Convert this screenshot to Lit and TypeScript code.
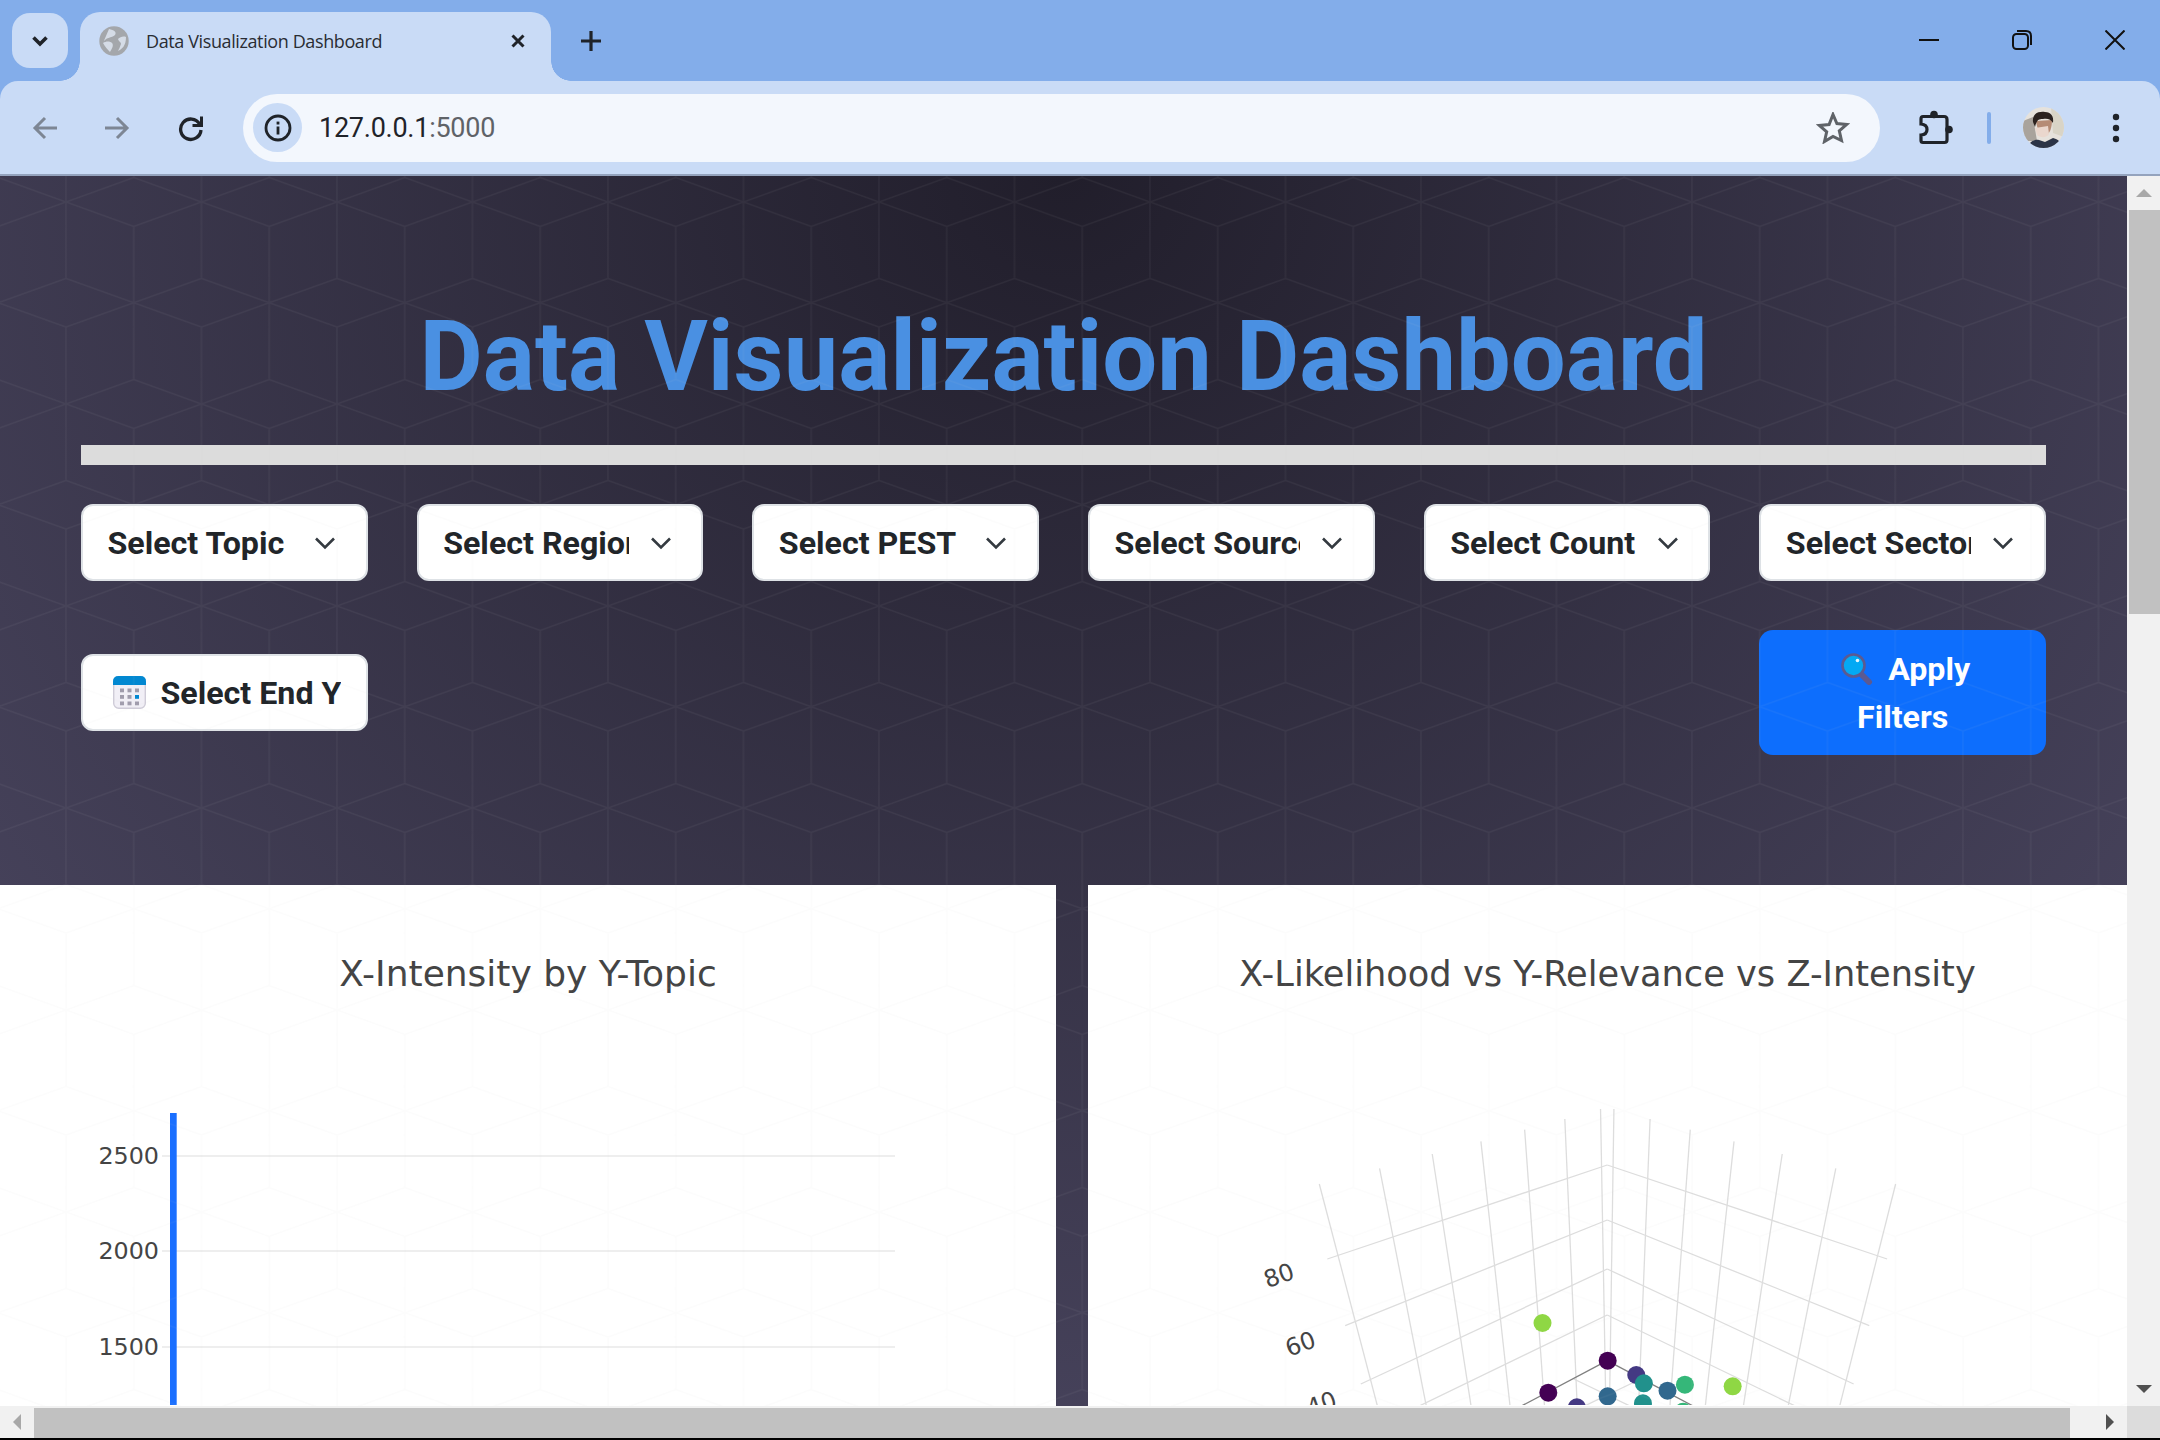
import { LitElement, html, css, svg } from "lit";
import { customElement } from "lit/decorators.js";

const LABELS = ["Select Topic", "Select Region", "Select PEST", "Select Source", "Select Country", "Select Sector"];

const zx = (x: number) => 142 + x / 2.24;
const zy = (y: number) => 74 + y / 3;

const GRID_LINES: number[][] = [
  [200, 285, 332, 960], [335, 238, 441, 960], [453, 195, 541, 960], [562, 157, 628, 960],
  [660, 122, 705, 960], [750, 90, 778, 960], [830, 60, 842, 960], [860, 60, 850, 960],
  [941, 90, 915, 960], [1031, 122, 985, 960], [1129, 157, 1064, 960], [1237, 195, 1149, 960],
  [1357, 238, 1249, 960], [1491, 285, 1364, 960],
  [845, 228, 218, 510], [845, 228, 1472, 510],
  [845, 393, 258, 710], [845, 393, 1432, 710],
  [845, 540, 293, 885], [845, 540, 1397, 885],
  [845, 678, 410, 960], [845, 678, 1280, 960],
  [770, 870, 910, 960], [920, 870, 780, 960],
];
const DARK_LINES: number[][] = [[845, 815, 640, 960], [845, 815, 1050, 960]];
const POINTS: [number, number, string][] = [
  [700, 702, "#8fd744"], [846, 815, "#440154"], [713, 911, "#440154"], [910, 858, "#443983"],
  [777, 955, "#443983"], [846, 922, "#31688e"], [980, 905, "#31688e"], [927, 883, "#21918c"],
  [925, 943, "#21918c"], [1019, 887, "#35b779"], [1015, 968, "#35b779"], [1126, 892, "#8fd744"],
];
const Z_TICKS: [string, number, number][] = [["80", 110, 560], ["60", 158, 765], ["40", 205, 945]];
const Y_TICKS: [string, number][] = [["2500", 141], ["2000", 236], ["1500", 332]];

@customElement("app-root")
export class AppRoot extends LitElement {
  static styles = css`
    :host { display: block; width: 2160px; height: 1440px; overflow: hidden; background: #000; font-family: Roboto, "Liberation Sans", sans-serif; }
    svg { display: block; flex: none; }
    .shell { display: flex; flex-direction: column; height: 1438px; }

    .chrome { background: #83adea; flex: none; }
    .strip { height: 81px; display: flex; align-items: flex-end; padding-left: 12px; box-sizing: border-box; }
    .tab-search { width: 56px; height: 55px; margin-bottom: 13px; border-radius: 18px; background: #c9dbf6; display: flex; align-items: center; justify-content: center; }
    .tab { position: relative; margin-left: 12px; width: 471px; height: 69px; padding: 0 0 12px 19px; box-sizing: border-box; background: #c9dbf6; border-radius: 20px 20px 0 0; display: flex; align-items: center; }
    .tab::before, .tab::after { content: ""; position: absolute; bottom: 0; width: 20px; height: 20px; }
    .tab::before { left: -20px; background: radial-gradient(circle at 0 0, transparent 19.5px, #c9dbf6 20px); }
    .tab::after { right: -20px; background: radial-gradient(circle at 100% 0, transparent 19.5px, #c9dbf6 20px); }
    .tab-title { margin-left: 17px; font-family: "Open Sans", sans-serif; font-size: 18px; letter-spacing: -0.39px; color: #2a2d33; white-space: nowrap; width: 363px; flex: none; }
    .new-tab { margin: 0 0 29px 29px; }
    .win { margin-left: auto; display: flex; align-items: center; gap: 73px; margin-bottom: 31px; padding-right: 35px; }

    .toolbar { height: 93px; background: #c9dbf6; border-radius: 18px 18px 0 0; display: flex; align-items: center; padding-left: 24.5px; box-sizing: border-box; }
    .tb-icon { width: 40px; height: 40px; display: flex; align-items: center; justify-content: center; flex: none; }
    .fwd { margin-left: 32.5px; }
    .reload { margin-left: 33.5px; }
    .omni { margin-left: 32.5px; width: 1637px; height: 68px; border-radius: 34px; background: #f3f7fd; display: flex; align-items: center; flex: none; }
    .chip { margin-left: 10px; width: 49px; height: 49px; border-radius: 50%; background: #c9dbf6; display: flex; align-items: center; justify-content: center; }
    .url { margin-left: 17px; padding-top: 1px; font-size: 27px; letter-spacing: -0.25px; color: #1f2329; }
    .url span { color: #5f6368; }
    .star { margin-left: auto; margin-right: 27px; }
    .ext { margin-left: 36px; }
    .divider { margin-left: 31px; width: 4px; height: 32px; border-radius: 2px; background: #83adea; flex: none; }
    .avatar { margin-left: 31.5px; width: 41px; height: 41px; border-radius: 50%; overflow: hidden; flex: none; }
    .menu { margin-left: 32.5px; }
    .sep { height: 2px; background: #94a3bd; flex: none; }

    .view { flex: 1; display: flex; min-height: 0; }
    .page { position: relative; flex: 1; min-width: 0; overflow: hidden; display: flex; flex-direction: column; background: radial-gradient(ellipse 1500px 1400px at 1063px 0, #211e2b 0, #4a4660 100%); }
    .pattern { position: absolute; inset: 0; width: 100%; height: 100%; pointer-events: none; }

    .head { padding: 124px 81px 130px; flex: none; }
    h1 { margin: 0; text-align: center; font-size: 97.4px; line-height: 115px; font-weight: 700; color: #4a90e2; white-space: nowrap; }
    .rule { height: 20px; margin: 30px 0 39.4px; background: #dcdcdc; }
    .filters { display: grid; grid-template-columns: repeat(6, 1fr); gap: 49.4px 49px; align-items: center; }
    .field { height: 76.7px; box-sizing: border-box; border: 2px solid #dee2e6; border-radius: 12px; background: #fff; display: flex; align-items: center; padding-left: 24.5px; color: #212529; font-size: 32.2px; font-weight: 700; }
    .label { width: 185.5px; overflow: hidden; white-space: nowrap; flex: none; }
    .chev { margin-left: 21px; }
    .year { padding-left: 30px; }
    .year-text { margin-left: 14.5px; white-space: nowrap; overflow: hidden; }
    .apply { grid-column: 6; height: 124.7px; box-sizing: border-box; border-radius: 14px; background: #0d6efd; color: #fff; font-size: 32.2px; font-weight: 700; line-height: 48px; text-align: center; padding-top: 15px; }
    .apply-top { display: flex; align-items: center; justify-content: center; gap: 15px; padding-left: 6px; }

    .cards { flex: 1; min-height: 0; display: grid; grid-template-columns: 1056px 1fr; gap: 32px; }
    .card { background: #fff; overflow: hidden; min-width: 0; }
    .card-title { padding-top: 69px; height: 40px; line-height: 40px; margin-bottom: 21px; text-align: center; font-family: "DejaVu Sans", Verdana, sans-serif; color: #444; white-space: nowrap; }
    .title-a { font-size: 36px; }
    .title-b { font-size: 35.2px; }
    .tick { font-family: "DejaVu Sans", Verdana, sans-serif; font-size: 23.8px; fill: #444; }

    .vbar { width: 33px; flex: none; background: #f1f1f1; display: flex; flex-direction: column; }
    .vbtn { height: 34px; display: flex; align-items: center; justify-content: center; flex: none; }
    .vthumb { height: 404px; margin-left: 2px; background: #c1c1c1; flex: none; }
    .vdown { margin-top: auto; }
    .hbar { height: 32px; flex: none; display: flex; background: #f1f1f1; }
    .hbtn { width: 34px; display: flex; align-items: center; justify-content: center; flex: none; }
    .hthumb { width: 2036px; margin-top: 2px; background: #c1c1c1; flex: none; }
    .hright { width: 57px; display: flex; align-items: center; justify-content: center; flex: none; padding-left: 22px; box-sizing: border-box; }
    .corner { width: 33px; background: #dcdcdc; flex: none; }

    .up { width: 0; height: 0; border-left: 8px solid transparent; border-right: 8px solid transparent; border-bottom: 8px solid #a8a8a8; }
    .down { width: 0; height: 0; border-left: 8px solid transparent; border-right: 8px solid transparent; border-top: 8px solid #505050; }
    .left { width: 0; height: 0; border-top: 8px solid transparent; border-bottom: 8px solid transparent; border-right: 8px solid #a8a8a8; }
    .right { width: 0; height: 0; border-top: 8px solid transparent; border-bottom: 8px solid transparent; border-left: 8px solid #505050; }
  `;

  private chevron() {
    return html`<svg class="chev" width="22" height="14" viewBox="0 0 22 14"><path d="M2 2.5 11 11.5 20 2.5" fill="none" stroke="#343a40" stroke-width="2.6"/></svg>`;
  }

  private chrome() {
    return html`
      <div class="chrome">
        <div class="strip">
          <div class="tab-search">
            <svg width="18" height="12" viewBox="0 0 18 12"><path d="M2.5 2.5 9 9l6.5-6.5" fill="none" stroke="#1f2329" stroke-width="3.6"/></svg>
          </div>
          <div class="tab">
            <svg width="30" height="30" viewBox="0 0 30 30">
              <circle cx="15" cy="15" r="14.7" fill="#a4a7ab"/>
              <path d="M10 3C15 4 18 6 16 9 13 12 6 11 4 17 7 15 11 15 13 17 15 19 13 23 11 26 9 24 6 21 4 17M27 11c-3-1-6 0-8 2 1 3 3 3 3 5-1 3-2 5-3 7 4-2 8-5 8-14Z" fill="#d5dce6"/>
            </svg>
            <span class="tab-title">Data Visualization Dashboard</span>
            <svg width="18" height="18" viewBox="0 0 18 18"><path d="M3.5 3.5l11 11M14.5 3.5l-11 11" stroke="#1f2329" stroke-width="3"/></svg>
          </div>
          <svg class="new-tab" width="22" height="22" viewBox="0 0 22 22"><path d="M11 1v20M1 11h20" stroke="#1f2329" stroke-width="3.2"/></svg>
          <div class="win">
            <svg width="20" height="20" viewBox="0 0 20 20"><path d="M0 10h20" stroke="#111" stroke-width="2"/></svg>
            <svg width="20" height="20" viewBox="0 0 20 20" fill="none" stroke="#111" stroke-width="2"><rect x="1" y="4" width="15" height="15" rx="3.5"/><path d="M5 1h9c3 0 5 2 5 5v9"/></svg>
            <svg width="20" height="20" viewBox="0 0 20 20"><path d="M0.5 0.5l19 19M19.5 0.5l-19 19" stroke="#111" stroke-width="2"/></svg>
          </div>
        </div>
        <div class="toolbar">
          <div class="tb-icon"><svg width="26" height="24" viewBox="0 0 26 24" fill="none" stroke="#7d8694" stroke-width="3"><path d="M25 12H3M13 2 3 12l10 10"/></svg></div>
          <div class="tb-icon fwd"><svg width="26" height="24" viewBox="0 0 26 24" fill="none" stroke="#7d8694" stroke-width="3"><path d="M1 12h22M13 2l10 10-10 10"/></svg></div>
          <div class="tb-icon reload"><svg width="28" height="28" viewBox="0 0 28 28" fill="none" stroke="#1f2329" stroke-width="3.3"><path d="M22.6 10A10.2 10.2 0 1 0 24 16"/><path d="M24.5 2.5v9h-9" stroke-width="3"/></svg></div>
          <div class="omni">
            <div class="chip"><svg width="28" height="28" viewBox="0 0 28 28"><circle cx="14" cy="14" r="12" fill="none" stroke="#1f2329" stroke-width="2.8"/><rect x="12.6" y="12.5" width="2.8" height="8" fill="#1f2329"/><rect x="12.6" y="7.6" width="2.8" height="2.9" fill="#1f2329"/></svg></div>
            <div class="url">127.0.0.1<span>:5000</span></div>
            <div class="tb-icon star"><svg width="34" height="32" viewBox="0 1 34 32"><path d="M17 3.5l3.9 9 9.8.9-7.4 6.5 2.2 9.6L17 25.4l-8.5 5.1 2.2-9.6-7.4-6.5 9.8-.9z" fill="none" stroke="#5f6368" stroke-width="3"/></svg></div>
          </div>
          <div class="tb-icon ext"><svg width="36" height="36" viewBox="0 1 36 36"><path d="M5 7.5H26Q29 7.5 29 10.500V31Q29 33.500 26.500 33.500H5Q3 33.500 3 31.500V26Q9 25.500 9 20.500 9 15.500 3 15V10Q3 7.500 5 7.500Z" fill="none" stroke="#1f2329" stroke-width="3.200"/><circle cx="16" cy="5.500" r="3.800" fill="#1f2329"/><circle cx="31" cy="20.500" r="3.800" fill="#1f2329"/></svg></div>
          <div class="divider"></div>
          <div class="avatar">
            <svg width="41" height="41" viewBox="0 0 41 41">
              <rect width="41" height="41" fill="#e6e2dc"/>
              <path d="M0 14 10 10 14 34 0 34Z" fill="#a9a39c"/>
              <path d="M28 0H41V30L30 26Z" fill="#d9d4c6"/>
              <path d="M13 14C14 22 17 28 22 28 27 28 29 20 29 13Z" fill="#b58c76"/>
              <path d="M10 15C9 7 15 4 22 5 28 5 31 9 30 16 28 12 24 11 20 12 16 12 14 12 12 20Z" fill="#2b221f"/>
              <path d="M12 21 25 19 26 27C24 31 17 31 14 28Z" fill="#ead7cd"/>
              <path d="M4 41C7 34 12 32 16 33L22 35 30 31C34 32 38 34 40 41Z" fill="#2c3446"/>
            </svg>
          </div>
          <div class="tb-icon menu"><svg width="8" height="30" viewBox="0 0 8 30" fill="#1f2329"><circle cx="4" cy="4" r="3.200"/><circle cx="4" cy="15" r="3.200"/><circle cx="4" cy="26" r="3.200"/></svg></div>
        </div>
        <div class="sep"></div>
      </div>
    `;
  }

  private barChart() {
    return html`
      <svg width="1056" height="390" viewBox="0 0 1056 390">
        ${Y_TICKS.map(([t, y]) => svg`
          <line x1="162" x2="895" y1=${y} y2=${y} stroke="#eeeeee" stroke-width="2"/>
          <text class="tick" x="159" y=${y + 7.5} text-anchor="end">${t}</text>
        `)}
        <rect x="170" y="98" width="6.700" height="292" fill="#1a6fff"/>
      </svg>
    `;
  }

  private scatter() {
    return html`
      <svg width="1039" height="390" viewBox="0 0 1039 390">
        ${GRID_LINES.map(([a, b, c, d]) => svg`<line x1=${zx(a)} y1=${zy(b)} x2=${zx(c)} y2=${zy(d)} stroke="#dddddd" stroke-width="1.300"/>`)}
        ${DARK_LINES.map(([a, b, c, d]) => svg`<line x1=${zx(a)} y1=${zy(b)} x2=${zx(c)} y2=${zy(d)} stroke="#808080" stroke-width="1.300"/>`)}
        ${Z_TICKS.map(([t, x, y]) => svg`<text class="tick" text-anchor="middle" dominant-baseline="central" transform="translate(${zx(x)} ${zy(y)}) rotate(-20)">${t}</text>`)}
        ${POINTS.map(([x, y, c]) => svg`<circle cx=${zx(x)} cy=${zy(y)} r="9" fill=${c}/>`)}
      </svg>
    `;
  }

  render() {
    return html`
      <div class="shell">
        ${this.chrome()}
        <div class="view">
          <div class="page">
            <div class="head">
              <h1>Data Visualization Dashboard</h1>
              <div class="rule"></div>
              <div class="filters">
                ${LABELS.map((l) => html`<div class="field"><span class="label">${l}</span>${this.chevron()}</div>`)}
                <div class="field year">
                  <svg width="33" height="33" viewBox="0 0 33 33">
                    <rect x="0.700" y="0.700" width="31.600" height="31.600" rx="5" fill="#f1eff6" stroke="#cfccd8" stroke-width="1.400"/>
                    <path d="M0 9V5.500Q0 0 5.500 0H27.500Q33 0 33 5.500V9Z" fill="#0288d1"/>
                    ${[0, 1, 2].flatMap((r) => [0, 1, 2].map((c) => svg`<rect x=${7 + c * 7.5} y=${12.500 + r * 6.500} width="4" height="3.800" fill=${r === 1 && c === 2 ? "#0288d1" : "#a09cac"}/>`))}
                  </svg>
                  <span class="year-text">Select End Y</span>
                </div>
                <div class="apply">
                  <div class="apply-top">
                    <svg width="32" height="32" viewBox="0 0 32 32">
                      <path d="M19 20l9 9" stroke="#5c5a91" stroke-width="6" stroke-linecap="round"/>
                      <circle cx="12.500" cy="12.500" r="11" fill="#03a9f4" stroke="#5c5a91" stroke-width="2.600"/>
                      <circle cx="16.500" cy="7.500" r="1.800" fill="#e3f6ff"/>
                    </svg>
                    <span>Apply</span>
                  </div>
                  <div>Filters</div>
                </div>
              </div>
            </div>
            <div class="cards">
              <div class="card">
                <div class="card-title title-a">X-Intensity by Y-Topic</div>
                ${this.barChart()}
              </div>
              <div class="card">
                <div class="card-title title-b">X-Likelihood vs Y-Relevance vs Z-Intensity</div>
                ${this.scatter()}
              </div>
            </div>
            <svg class="pattern">
              <defs>
                <pattern id="hex" x="66" y="26" width="135.500" height="202" patternUnits="userSpaceOnUse">
                  <path d="M0 0V76.500M0 125V202M135.500 0V76.500M135.500 125V202M67.750 24.500V177.500M0 0 67.750 24.500 135.500 0M0 76.500 135.500 125M135.500 76.500 0 125M0 202 67.750 177.500 135.500 202" fill="none" stroke="rgb(200,200,200)" stroke-opacity="0.060" stroke-width="1.500"/>
                </pattern>
              </defs>
              <rect width="100%" height="100%" fill="url(#hex)"/>
            </svg>
          </div>
          <div class="vbar">
            <div class="vbtn"><div class="up"></div></div>
            <div class="vthumb"></div>
            <div class="vbtn vdown"><div class="down"></div></div>
          </div>
        </div>
        <div class="hbar">
          <div class="hbtn"><div class="left"></div></div>
          <div class="hthumb"></div>
          <div class="hright"><div class="right"></div></div>
          <div class="corner"></div>
        </div>
      </div>
    `;
  }
}
